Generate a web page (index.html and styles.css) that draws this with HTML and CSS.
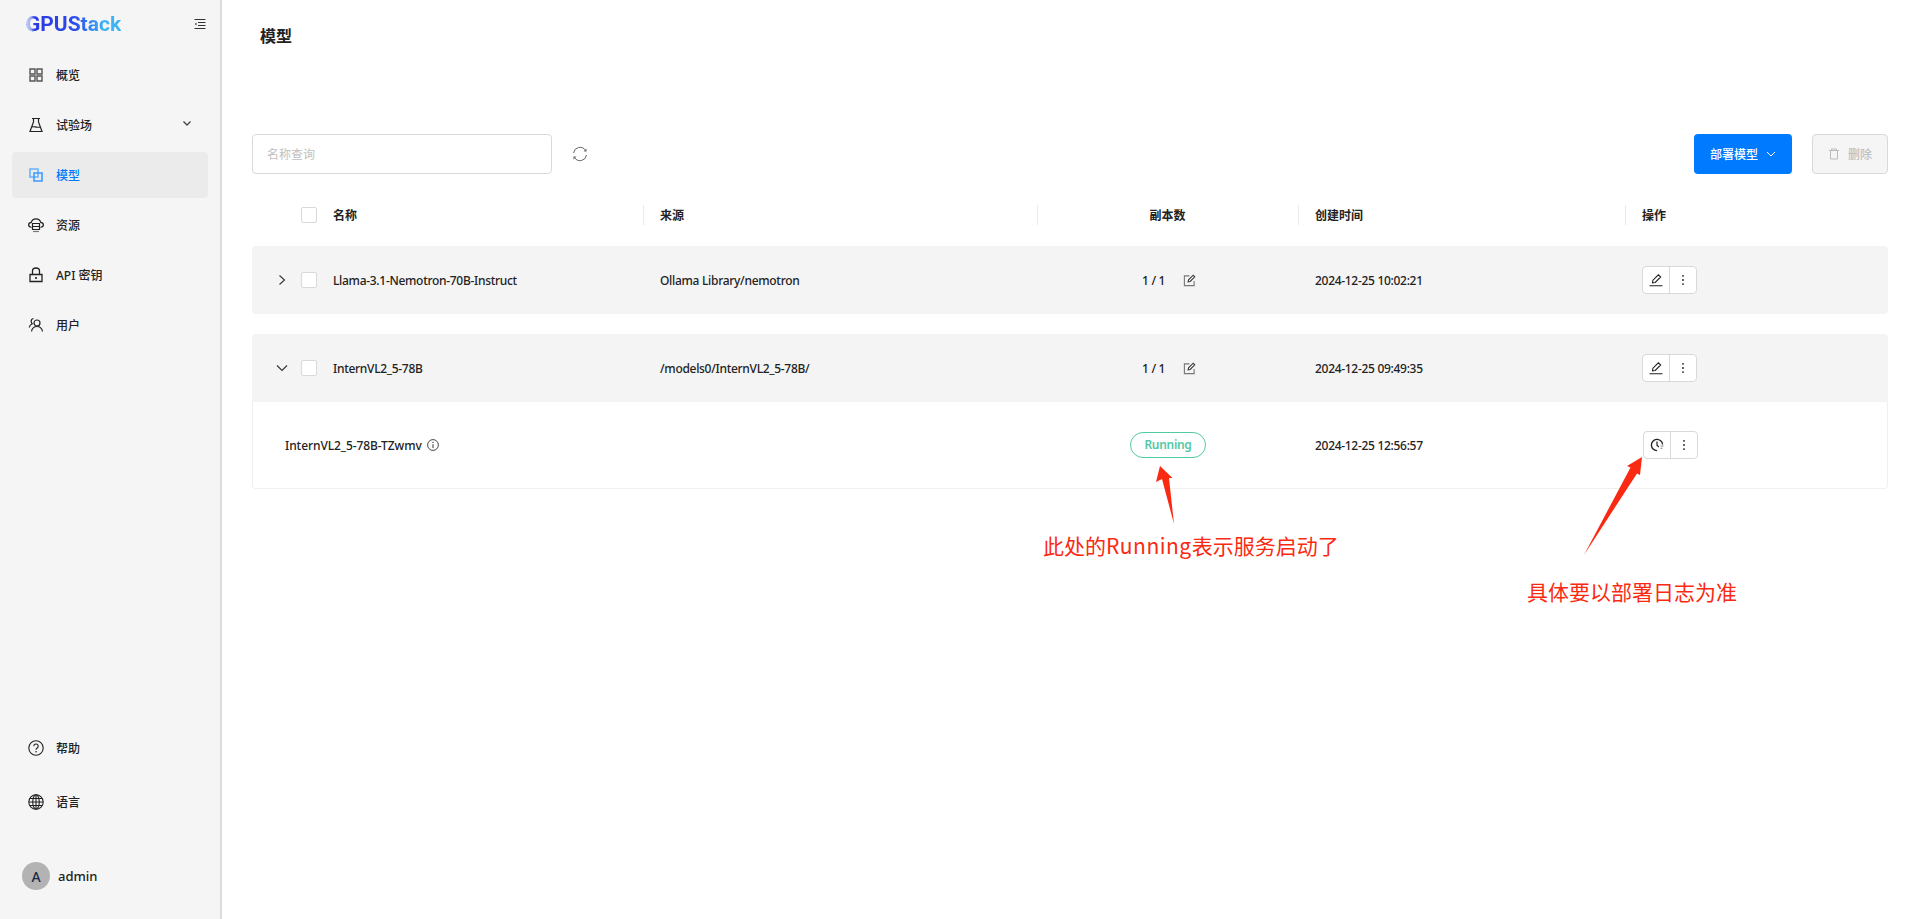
FILE: index.html
```html
<!DOCTYPE html>
<html>
<head>
    <title>GPUStack</title>
    <link rel="stylesheet" href="styles.css">
</head>
<body>
    <aside class="sidebar">
        <div class="brand">
            <span class="logo"><svg class="logo-ring" viewBox="0 0 16 16" width="16" height="16"><path d="M8 1.500a6.500 6.500 0 0 0 0 13" fill="none" stroke="#9db4ee" stroke-width="3" stroke-dasharray="1.2 0.8"/></svg><span class="logo-text">GPUStack</span></span>
            <svg class="collapse" viewBox="0 0 12 12" width="12" height="12"><path d="M0.5 1.5h11M4 4.5h7.5M4 7.5h7.5M0.5 10.5h11" stroke="#333" fill="none"/><path d="M2.5 4.5L0.8 6l1.7 1.5z" fill="#333"/></svg>
        </div>
        <nav class="nav">
            <a class="nav-item"><svg class="nav-icon" viewBox="0 0 16 16"><path d="M2 2h5v5H2zM9 2h5v5H9zM2 9h5v5H2zM9 9h5v5H9z" fill="none" stroke="#555" stroke-width="1.4"/></svg>概览</a>
            <a class="nav-item"><svg class="nav-icon" viewBox="0 0 16 16"><path d="M4 1.500h8M5.500 1.500v3.500L2 14.500h12L10.500 5V1.500M4 10c2-1 4 1 8 0" fill="none" stroke="#222" stroke-width="1.2"/></svg>试验场<svg class="nav-caret" viewBox="0 0 10 10" width="10" height="10"><path d="M1.500 3.500L5 7l3.500-3.500" fill="none" stroke="#444" stroke-width="1.3"/></svg></a>
            <a class="nav-item active"><svg class="nav-icon" viewBox="0 0 16 16"><path d="M2 2h8v8H2z" fill="none" stroke="#69b1ff" stroke-width="1.6"/><path d="M6 6h8v8H6z" fill="none" stroke="#3d9bff" stroke-width="1.6"/></svg>模型</a>
            <a class="nav-item"><svg class="nav-icon" viewBox="0 0 16 16"><path d="M3.500 10.500C1.800 10.200.6 9 .6 7.800c0-1.300 1.300-2.300 2.700-2.500C3.800 3.200 5.800 1.800 8 1.800s4.200 1.400 4.700 3.500c1.400.2 2.700 1.200 2.700 2.500 0 1.200-1.200 2.400-2.900 2.700" fill="none" stroke="#222" stroke-width="1.2"/><path d="M4.500 6.500h7v6h-7zM4.500 9.500h7" fill="none" stroke="#222" stroke-width="1.2"/><path d="M5 14.500h6" stroke="#777" stroke-width="1.2"/></svg>资源</a>
            <a class="nav-item"><svg class="nav-icon" viewBox="0 0 16 16"><path d="M2 7.500h12v7H2zM4.500 7.500V4a3.500 3 0 0 1 7 0v3.500" fill="none" stroke="#222" stroke-width="1.3"/><circle cx="8" cy="11" r="1.1" fill="#222"/></svg>API 密钥</a>
            <a class="nav-item"><svg class="nav-icon" viewBox="0 0 16 16"><circle cx="9" cy="6" r="3" fill="none" stroke="#222" stroke-width="1.2"/><path d="M3.500 14.500c.5-3 2.700-5 5.500-5s5 2 5.500 5M5.500 1.500C3.800 1.800 3 3.200 3.200 4.800c.1.800.5 1.400 1 1.900C2.500 7.500 1.500 9 1.200 10.500" fill="none" stroke="#222" stroke-width="1.2"/></svg>用户</a>
        </nav>
        <div class="sidebar-foot">
            <a class="nav-item"><svg class="nav-icon" viewBox="0 0 16 16"><circle cx="8" cy="8" r="7.2" fill="none" stroke="#222" stroke-width="1.1"/><path d="M5.800 6.200a2.200 2.200 0 1 1 3.400 1.800c-.8.500-1.200.9-1.200 1.800" fill="none" stroke="#222" stroke-width="1.1"/><circle cx="8" cy="11.800" r=".8" fill="#222"/></svg>帮助</a>
            <a class="nav-item lang"><svg class="nav-icon" viewBox="0 0 16 16"><g fill="none" stroke="#222" stroke-width="1.1"><circle cx="8" cy="8" r="7.2"/><ellipse cx="8" cy="8" rx="3.3" ry="7.2"/><path d="M8 .8v14.400M.8 8h14.400M1.800 4.500h12.400M1.800 11.500h12.400"/></g></svg>语言</a>
            <div class="user"><span class="avatar">A</span><span class="user-name">admin</span></div>
        </div>
    </aside>

    <main class="content">
        <h1 class="page-title">模型</h1>

        <div class="toolbar">
            <div class="search">名称查询</div>
            <svg class="refresh" viewBox="0 0 16 16" width="16" height="16"><path d="M1.500 7A6.500 6.500 0 0 1 13.500 4.500M14.500 9A6.500 6.500 0 0 1 2.500 11.500" fill="none" stroke="#666" stroke-width="1"/><path d="M14.500 2.500v3h-3zM1.500 13.500v-3h3z" fill="#666"/></svg>
            <div class="toolbar-right">
                <button class="btn-primary">部署模型<svg viewBox="0 0 10 10" width="10" height="10"><path d="M1 3l4 4 4-4" fill="none" stroke="#fff"/></svg></button>
                <button class="btn-disabled"><svg viewBox="0 0 12 12" width="12" height="12"><path d="M1 2.500h10M3.500 2.500V1h5v1.500M2.500 2.500v8.500h7V2.500" fill="none" stroke="#bbb"/></svg>删除</button>
            </div>
        </div>

        <div class="table-head row-grid">
            <span class="cell-check"><span class="check"></span></span>
            <span class="cell">名称</span>
            <span class="cell sep">来源</span>
            <span class="cell sep center">副本数</span>
            <span class="cell sep">创建时间</span>
            <span class="cell sep">操作</span>
        </div>

        <div class="group">
            <div class="row-grid model-row">
                <span class="cell-check"><svg class="expander" viewBox="0 0 12 12" width="12" height="12"><path d="M3.500 1.500L8.500 6l-5 4.500" fill="none" stroke="#333" stroke-width="1.1"/></svg><span class="check"></span></span>
                <span class="cell">Llama-3.1-Nemotron-70B-Instruct</span>
                <span class="cell">Ollama Library/nemotron</span>
                <span class="cell replicas">1 / 1<svg viewBox="0 0 14 14" width="13" height="13"><path d="M12 7.500V12.500H1.500V2H7" fill="none" stroke="#777" stroke-width="1.2"/><path d="M5.500 8.500l.5-2.200L11 1.300l1.700 1.700-5 5z" fill="none" stroke="#333" stroke-width="1.1"/></svg></span>
                <span class="cell">2024-12-25 10:02:21</span>
                <span class="cell"><span class="actions"><span class="act"><svg viewBox="0 0 14 14" width="14" height="14"><path d="M3.500 9.800l.4-2.600L9.400 1.800 11.700 4 6.200 9.500zM.5 12.800h13" fill="none" stroke="#222" stroke-width="1.1"/></svg></span><span class="act more"><svg viewBox="0 0 14 14" width="14" height="14"><path d="M7 1.900v1.800M7 6.100v1.800M7 10.300v1.800" stroke="#333" stroke-width="1.5"/></svg></span></span></span>
            </div>
        </div>

        <div class="group">
            <div class="row-grid model-row open">
                <span class="cell-check"><svg class="expander" viewBox="0 0 12 12" width="12" height="12"><path d="M1 3.500L6 8.500l5-5" fill="none" stroke="#333" stroke-width="1.1"/></svg><span class="check"></span></span>
                <span class="cell">InternVL2_5-78B</span>
                <span class="cell">/models0/InternVL2_5-78B/</span>
                <span class="cell replicas">1 / 1<svg viewBox="0 0 14 14" width="13" height="13"><path d="M12 7.500V12.500H1.500V2H7" fill="none" stroke="#777" stroke-width="1.2"/><path d="M5.500 8.500l.5-2.200L11 1.300l1.700 1.700-5 5z" fill="none" stroke="#333" stroke-width="1.1"/></svg></span>
                <span class="cell">2024-12-25 09:49:35</span>
                <span class="cell"><span class="actions"><span class="act"><svg viewBox="0 0 14 14" width="14" height="14"><path d="M3.500 9.800l.4-2.600L9.400 1.800 11.700 4 6.200 9.500zM.5 12.800h13" fill="none" stroke="#222" stroke-width="1.1"/></svg></span><span class="act more"><svg viewBox="0 0 14 14" width="14" height="14"><path d="M7 1.900v1.800M7 6.100v1.800M7 10.300v1.800" stroke="#333" stroke-width="1.5"/></svg></span></span></span>
            </div>
            <div class="instance-row">
                <span class="instance-name">InternVL2_5-78B-TZwmv<svg viewBox="0 0 12 12" width="12" height="12"><circle cx="6" cy="6" r="5.4" fill="none" stroke="#333" stroke-width=".9"/><path d="M6 5.200v3.800" stroke="#333" stroke-width="1"/><circle cx="6" cy="3.400" r=".7" fill="#333"/></svg></span>
                <span class="status-cell"><span class="status">Running</span></span>
                <span class="instance-time">2024-12-25 12:56:57</span>
                <span class="actions"><span class="act"><svg viewBox="0 0 14 14" width="14" height="14"><path d="M12.600 6.500A5.600 5.600 0 1 0 7 12.600" fill="none" stroke="#222" stroke-width="1.3"/><path d="M7 3.500V7.300l1.800 1.700" fill="none" stroke="#222" stroke-width="1.2"/><path d="M10.500 8h3M10.500 10.300h2" stroke="#888" stroke-width="1.1"/></svg></span><span class="act more"><svg viewBox="0 0 14 14" width="14" height="14"><path d="M7 1.900v1.800M7 6.100v1.800M7 10.300v1.800" stroke="#333" stroke-width="1.5"/></svg></span></span>
            </div>
        </div>
    </main>

    <!-- red annotations drawn on top of the screenshot -->
    <svg class="arrow arrow-a" viewBox="0 0 20 60" width="20" height="60"><path d="M4 0L0 16l6-3 12 45L13 12l3.500 0z" fill="#fa2a12"/></svg>
    <svg class="arrow arrow-b" viewBox="0 0 62 102" width="62" height="102"><path d="M59 2L44 11l3.500 1.500L1 100 54 18.500 57 20z" fill="#fa2a12"/></svg>
    <div class="note note-a">此处的<span class="note-latin">Running</span>表示服务启动了</div>
    <div class="note note-b">具体要以部署日志为准</div>
</body>
</html>
```

FILE: styles.css
```css
* {
    box-sizing: border-box;
}

body {
    margin: 0;
    height: 919px;
    display: flex;
    overflow: hidden;
    font-family: "Noto Sans", "Noto Sans CJK SC", sans-serif;
    font-size: 12px;
    font-weight: 500;
    color: #222;
    background: #fff;
}

/* sidebar */
.sidebar {
    width: 222px;
    flex: none;
    display: flex;
    flex-direction: column;
    background: #f5f5f5;
    border-right: 2px solid #dcdcdc;
    padding: 0 12px;
}

.brand {
    height: 52px;
    display: flex;
    align-items: center;
    justify-content: space-between;
    padding: 0 2px 4px 14px;
}

.logo {
    display: flex;
    align-items: center;
}

.logo-ring {
    margin-right: -16px;
}

.logo-text {
    font-family: Roboto, sans-serif;
    font-size: 21px;
    font-weight: 700;
    background: linear-gradient(90deg, #c3cff2 0%, #9db0ee 5%, #2b3ae0 9%, #2b4bea 52%, #3fb4f5 82%);
    -webkit-background-clip: text;
    background-clip: text;
    color: transparent;
}

.nav {
    display: flex;
    flex-direction: column;
    gap: 4px;
}

.nav-item {
    height: 46px;
    display: flex;
    align-items: center;
    padding-left: 16px;
    border-radius: 4px;
    color: #222;
}

.nav-item.active {
    background: #ebebeb;
    color: #007bff;
}

.nav-icon {
    width: 16px;
    height: 16px;
    margin-right: 12px;
    flex: none;
}

.nav-caret {
    margin-left: 90px;
    margin-top: -4px;
}

.sidebar-foot {
    margin-top: auto;
    display: flex;
    flex-direction: column;
}

.lang {
    margin-top: 8px;
}

.user {
    display: flex;
    align-items: center;
    gap: 8px;
    margin: 37px 0 29px 10px;
    font-size: 13px;
}

.avatar {
    width: 28px;
    height: 28px;
    border-radius: 50%;
    background: #b3b3b3;
    display: flex;
    align-items: center;
    justify-content: center;
    font-size: 14px;
    color: #1a2a4a;
}

/* main */
.content {
    flex: 1;
    padding: 0 32px 0 30px;
}

.page-title {
    margin: 0;
    height: 134px;
    padding: 25px 0 0 8px;
    font-size: 16px;
    line-height: 22px;
    font-weight: 700;
    color: #222;
}

.toolbar {
    display: flex;
    align-items: center;
    height: 40px;
}

.search {
    width: 300px;
    height: 40px;
    border: 1px solid #d9d9d9;
    border-radius: 4px;
    padding-left: 14px;
    line-height: 40px;
    color: #bfbfbf;
    font-weight: 400;
}

.refresh {
    margin-left: 20px;
}

.toolbar-right {
    margin-left: auto;
    display: flex;
    gap: 20px;
}

.toolbar-right button {
    height: 40px;
    font: inherit;
    border-radius: 4px;
    display: flex;
    align-items: center;
    justify-content: center;
}

.btn-primary {
    width: 98px;
    gap: 8px;
    border: none;
    background: #007bff;
    color: #fff;
}

.btn-disabled {
    width: 76px;
    gap: 8px;
    border: 1px solid #d9d9d9;
    background: #f5f5f5;
    color: #bfbfbf;
}

/* table */
.row-grid {
    display: grid;
    grid-template-columns: 81px 327px 394px 261px 327px 246px;
    align-items: center;
}

.table-head {
    height: 32px;
    margin-top: 25px;
    margin-bottom: 15px;
    font-weight: 700;
    color: #222;
}

.cell-check {
    display: flex;
    align-items: center;
    justify-content: flex-end;
    gap: 13px;
    padding-right: 16px;
}

.check {
    width: 16px;
    height: 16px;
    flex: none;
    background: #fff;
    border: 1px solid #d9d9d9;
    border-radius: 2px;
}

.cell.sep {
    position: relative;
}

.table-head .sep::before {
    content: "";
    position: absolute;
    left: -17px;
    top: -1px;
    height: 20px;
    border-left: 1px solid #eaeaea;
}

.center {
    text-align: center;
    margin-left: -17px;
    margin-right: 17px;
}

.table-head .center::before {
    left: 0;
}

.group {
    margin-bottom: 20px;
}

.model-row {
    height: 68px;
    background: #f4f4f4;
    border-radius: 4px;
    letter-spacing: -0.3px;
}

.model-row.open {
    border-radius: 4px 4px 0 0;
}

.replicas {
    display: flex;
    align-items: center;
    gap: 18px;
    padding-left: 88px;
}

.actions {
    display: inline-flex;
    height: 28px;
    vertical-align: middle;
    background: #fff;
    border: 1px solid #d9d9d9;
    border-radius: 4px;
}

.act {
    width: 26px;
    display: flex;
    align-items: center;
    justify-content: center;
}

.act.more {
    width: 27px;
    border-left: 1px solid #d9d9d9;
}

.instance-row {
    display: grid;
    grid-template-columns: 845px 185px 328px auto;
    align-items: center;
    height: 87px;
    border: 1px solid #f0f0f0;
    border-top: none;
    border-radius: 0 0 4px 4px;
    padding-left: 32px;
    letter-spacing: -0.3px;
}

.instance-name {
    display: flex;
    align-items: center;
    gap: 5px;
    letter-spacing: -0.08px;
}

.status-cell {
    display: flex;
}

.status {
    width: 76px;
    height: 26px;
    border: 1px solid #54c8a5;
    border-radius: 13px;
    text-align: center;
    line-height: 24px;
    color: #54c8a5;
    font-weight: 600;
}

.instance-row .actions {
    justify-self: start;
}

/* annotations */
.arrow {
    position: absolute;
}

.arrow-a {
    left: 1156px;
    top: 466px;
}

.arrow-b {
    left: 1583px;
    top: 455px;
}

.note {
    position: absolute;
    font-family: "Noto Sans CJK SC", "Noto Sans", sans-serif;
    font-size: 21px;
    line-height: 30px;
    font-weight: 400;
    color: #fa2a12;
    white-space: nowrap;
}

.note-latin {
    letter-spacing: 0.5px;
}

.note-a {
    left: 1043px;
    top: 530px;
}

.note-b {
    left: 1527px;
    top: 576px;
}
```
